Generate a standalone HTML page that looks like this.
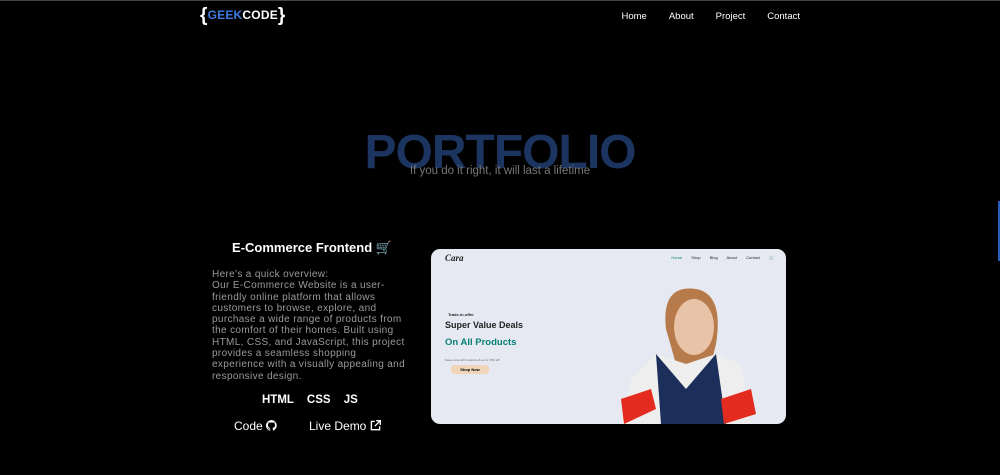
<!DOCTYPE html>
<html><head><meta charset="utf-8"><style>
*{margin:0;padding:0;box-sizing:border-box}
body{width:1000px;height:475px;background:#000;font-family:"Liberation Sans",sans-serif;position:relative;overflow:hidden;border-top:1px solid #444}
.logo{position:absolute;left:200px;top:4px;color:#fff;font-weight:bold;font-size:12px;letter-spacing:0.2px}
.logo .b{font-size:19px;vertical-align:-2px;font-weight:bold}
.logo .g{color:#3d7be0}
nav{position:absolute;top:10px;right:200px;font-size:9.5px;color:#fff}
nav span{margin-left:22px}
.pf{position:absolute;left:0;width:1000px;top:124px;text-align:center;font-size:48px;font-weight:900;color:#1c3460;letter-spacing:-1px}
.sub{position:absolute;left:0;width:1000px;top:164px;text-align:center;font-size:11.5px;color:#777}
h2{position:absolute;left:212px;width:200px;top:239px;text-align:center;color:#fff;font-size:13px;font-weight:bold}
.desc{position:absolute;left:212px;top:268px;width:197px;color:#9a9a9a;font-size:10px;line-height:11.3px;letter-spacing:0.35px}
.tech{position:absolute;left:262px;top:393px;color:#fff;font-weight:bold;font-size:11.5px;word-spacing:10px}
.links{position:absolute;top:418px;color:#fff;font-size:12px}
.shot{position:absolute;left:431px;top:248px;width:355px;height:175px;background:#e6e9f1;border-radius:9px;overflow:hidden}
</style></head><body>
<div class="logo"><span class="b">{</span><span class="g">GEEK</span>CODE<span class="b">}</span></div>
<nav><span>Home</span><span>About</span><span>Project</span><span>Contact</span></nav>
<div class="pf">PORTFOLIO</div>
<div class="sub">If you do it right, it will last a lifetime</div>
<h2>E-Commerce Frontend 🛒</h2>
<div class="desc">Here's a quick overview:<br>Our E-Commerce Website is a user-friendly online platform that allows customers to browse, explore, and purchase a wide range of products from the comfort of their homes. Built using HTML, CSS, and JavaScript, this project provides a seamless shopping experience with a visually appealing and responsive design.</div>
<div class="tech">HTML CSS JS</div>
<div class="links" style="left:234px">Code <svg width="11" height="11" viewBox="0 0 16 16" style="vertical-align:-1px"><path fill="#fff" d="M8 0a8 8 0 0 0-2.5 15.6c.4 0 .5-.2.5-.4v-1.5c-2.2.5-2.7-1-2.7-1-.4-.9-.9-1.200-.9-1.2-.7-.5.1-.5.1-.5.8.1 1.2.8 1.2.8.7 1.3 1.9.9 2.3.7.1-.5.3-.9.5-1.1-1.8-.2-3.6-.9-3.6-4 0-.9.3-1.6.8-2.1-.1-.2-.4-1 .1-2.1 0 0 .7-.2 2.2.8a7.5 7.5 0 0 1 4 0c1.5-1 2.2-.8 2.2-.8.4 1.1.2 1.9.1 2.1.5.6.8 1.3.8 2.1 0 3.1-1.9 3.7-3.6 3.9.3.3.5.8.5 1.5v2.2c0 .2.1.5.6.4A8 8 0 0 0 8 0z"/></svg></div>
<div class="links" style="left:309px">Live Demo <svg width="11" height="11" viewBox="0 0 16 16" style="vertical-align:-1px"><path fill="none" stroke="#fff" stroke-width="2" d="M7 2H2v12h12V9M9 1h6v6M15 1 7 9"/></svg></div>
<div class="shot">
<div style="position:absolute;left:14px;top:4px;font:italic bold 9px 'Liberation Serif',serif;color:#222">Cara</div>
<div style="position:absolute;right:12px;top:6px;font-size:4px;color:#222;word-spacing:8px"><span style="color:#088178">Home</span> Shop Blog About Contact 🛒</div>
<div style="position:absolute;left:17px;top:63px;font-size:4px;font-weight:bold;color:#222">Trade-in-offer</div>
<div style="position:absolute;left:14px;top:71px;font-size:9px;font-weight:bold;color:#222">Super Value Deals</div>
<div style="position:absolute;left:14px;top:88px;font-size:9.5px;font-weight:bold;color:#088178">On All Products</div>
<div style="position:absolute;left:14px;top:109px;font-size:3px;color:#666">Save more with coupons &amp; up to 70% off!</div>
<div style="position:absolute;left:20px;top:116px;width:38px;height:9px;background:#f0d5b8;border-radius:3px;font-size:4px;text-align:center;line-height:9px;font-weight:bold">Shop Now</div>
<svg style="position:absolute;left:185px;top:20px" width="150" height="155" viewBox="0 0 150 155">
<path d="M50 60 Q45 15 80 20 Q108 25 100 75 L95 95 L60 95Z" fill="#b77a4a"/>
<ellipse cx="78" cy="58" rx="20" ry="28" fill="#e9c3a8"/>
<path d="M5 155 L15 110 L40 85 L70 95 L100 85 L125 95 L135 155Z" fill="#eee"/>
<path d="M40 85 L70 120 L100 85 L110 155 L45 155Z" fill="#1c2f5a"/>
<path d="M5 130 L35 120 L40 140 L8 155Z M105 130 L135 120 L140 145 L108 155Z" fill="#e42b1f"/>
</svg>
</div>
<div style="position:absolute;right:0;top:200px;width:2px;height:60px;background:#2a5cc0"></div>
</body></html>
